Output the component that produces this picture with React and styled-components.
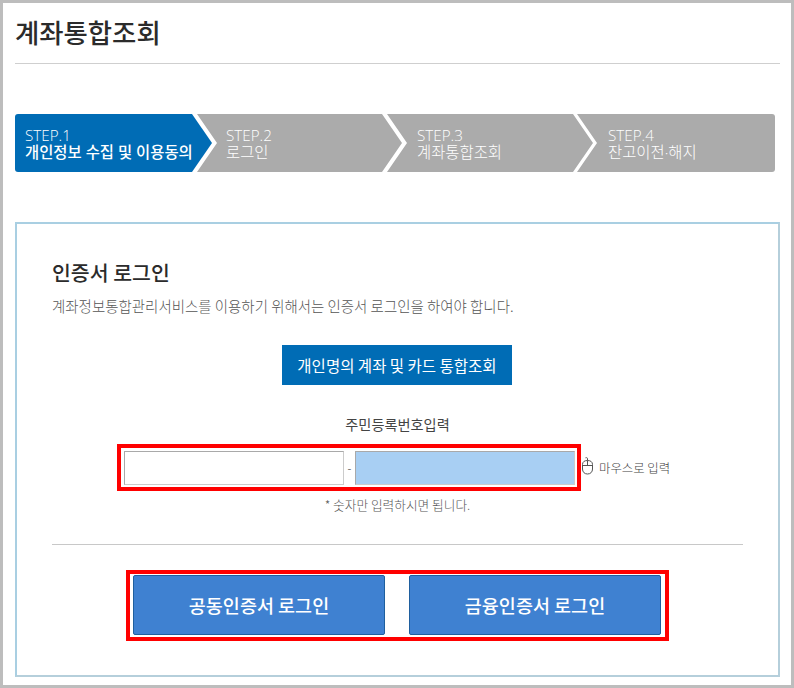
import React from "react";
import styled, { createGlobalStyle } from "styled-components";

const Global = createGlobalStyle`
  html, body { margin: 0; padding: 0; background: #fff; }
  body { font-family: "Noto Sans CJK KR", "Noto Sans", sans-serif; }
  * { box-sizing: border-box; }
`;

const Frame = styled.div`
  width: 794px;
  height: 688px;
  border: 3px solid #bdbdbd;
  padding: 0 11px 0 12px;
  background: #fff;
  overflow: hidden;
`;

const PageHeader = styled.header`
  height: 61px;
  border-bottom: 1px solid #cfcfcf;
  display: flex;
  align-items: flex-start;
`;

const PageTitle = styled.h1`
  margin: 11px 0 0 0;
  font-size: 26.4px;
  line-height: 36px;
  font-weight: 500;
  color: #2b2b2b;
`;

const StepList = styled.ol`
  list-style: none;
  margin: 50px 0 0;
  padding: 0;
  width: 760px;
  height: 58px;
  display: flex;
`;

const Step = styled.li`
  flex: 0 0 ${(p) => p.$w}px;
  margin-left: ${(p) => p.$ml}px;
  padding: 13px 0 0 ${(p) => p.$pl}px;
  background: ${(p) => (p.$active ? "#006cb5" : "#ababab")};
  color: #fff;
  font-size: 15.4px;
  line-height: 17px;
  font-weight: 300;
  clip-path: ${(p) =>
    p.$last
      ? "polygon(0 0, 100% 0, 100% 100%, 0 100%, 20px 50%)"
      : p.$first
      ? "polygon(0 0, calc(100% - 20px) 0, 100% 50%, calc(100% - 20px) 100%, 0 100%)"
      : "polygon(0 0, calc(100% - 20px) 0, 100% 50%, calc(100% - 20px) 100%, 0 100%, 20px 50%)"};
  border-radius: ${(p) => (p.$first ? "3px 0 0 3px" : p.$last ? "0 3px 3px 0" : "0")};
`;

const StepNo = styled.div`
  font-family: "Open Sans", "Noto Sans CJK KR", sans-serif;
  font-size: 15.2px;
`;

const StepName = styled.div`
  font-family: "Open Sans", "Noto Sans CJK KR", sans-serif;
  font-weight: ${(p) => (p.$active ? 500 : 300)};
  white-space: nowrap;
  font-size: 15.4px;
`;

const Card = styled.section`
  margin-top: 50px;
  height: 455px;
  border: 2px solid #a9cfe2;
  border-bottom-color: #b5cfdb;
  border-right-color: #b5cfdb;
  padding: 0 35px;
`;

const CardTitle = styled.h2`
  margin: 34px 0 0;
  font-size: 20.5px;
  line-height: 28px;
  font-weight: 500;
  color: #2b2b2b;
`;

const Lead = styled.p`
  margin: 10px 0 0;
  font-size: 14.46px;
  line-height: 20px;
  font-weight: 300;
  color: #555;
  white-space: nowrap;
`;

const Center = styled.div`
  display: flex;
  justify-content: center;
  padding-right: 1px;
`;

const PersonalButton = styled.button`
  margin-top: 29px;
  width: 230px;
  height: 40px;
  border: 0;
  background: #006cb5;
  color: #fff;
  font: 400 15.5px "Noto Sans CJK KR", sans-serif;
  padding: 0;
`;

const FieldLabel = styled.div`
  margin-top: 29px;
  text-align: center;
  font-size: 14.2px;
  line-height: 20px;
  color: #444;
`;

const InputRow = styled.div`
  margin: 10px 0 0 65px;
  display: flex;
  align-items: center;
`;

const RedBox = styled.div`
  display: flex;
  align-items: center;
  border: 4px solid #f00;
  padding: ${(p) => p.$pad};
  gap: ${(p) => p.$gap}px;
`;

const TextField = styled.div`
  width: 220px;
  height: 34px;
  border: 1px solid #ccc;
  border-top-color: #a9a9a9;
  border-left-color: #a9a9a9;
  background: ${(p) => (p.$masked ? "#a8cff3" : "#fff")};
`;

const Dash = styled.span`
  width: 11px;
  text-align: center;
  font-size: 11px;
  line-height: 14px;
  color: #666;
`;

const MouseHint = styled.div`
  display: flex;
  align-items: center;
  font-size: 12.4px;
  font-weight: 300;
  color: #444;
  white-space: nowrap;
`;

const MouseIcon = styled.svg`
  width: 18px;
  height: 18px;
  margin-bottom: 4px;
  display: block;
`;

const Hint = styled.div`
  margin-top: 5px;
  text-align: center;
  font-size: 12.7px;
  line-height: 18px;
  font-weight: 300;
  color: #555;
`;

const Divider = styled.hr`
  margin: 30px 0 0;
  border: 0;
  border-top: 1px solid #c8c8c8;
`;

const LoginRow = styled.div`
  margin: 25px 0 0 74px;
  display: flex;
`;

const LoginButton = styled.button`
  width: 252px;
  height: 60px;
  border: 1px solid #1f5f9e;
  border-radius: 2px;
  background: #3f81d1;
  color: #fff;
  font: 500 18.5px "Noto Sans CJK KR", sans-serif;
  padding: 0;
`;

const steps = [
  { no: "STEP.1", name: "개인정보 수집 및 이용동의", w: 197, ml: 0, pl: 10, active: true, first: true },
  { no: "STEP.2", name: "로그인", w: 205, ml: -15, pl: 29 },
  { no: "STEP.3", name: "계좌통합조회", w: 206, ml: -15, pl: 30 },
  { no: "STEP.4", name: "잔고이전·해지", w: 198, ml: -16, pl: 31, last: true },
];

export default function App() {
  return (
    <>
      <Global />
      <Frame>
        <PageHeader>
          <PageTitle>계좌통합조회</PageTitle>
        </PageHeader>
        <StepList>
          {steps.map((s) => (
            <Step key={s.no} $w={s.w} $ml={s.ml} $pl={s.pl} $active={s.active} $first={s.first} $last={s.last}>
              <StepNo>{s.no}</StepNo>
              <StepName $active={s.active}>{s.name}</StepName>
            </Step>
          ))}
        </StepList>
        <Card>
          <CardTitle>인증서 로그인</CardTitle>
          <Lead>계좌정보통합관리서비스를 이용하기 위해서는 인증서 로그인을 하여야 합니다.</Lead>
          <Center>
            <PersonalButton>개인명의 계좌 및 카드 통합조회</PersonalButton>
          </Center>
          <FieldLabel>주민등록번호입력</FieldLabel>
          <InputRow>
            <RedBox $pad="3px 2px 2px 3px" $gap={0}>
              <TextField />
              <Dash>-</Dash>
              <TextField $masked />
            </RedBox>
            <MouseHint>
              <MouseIcon viewBox="0 0 18 18" fill="none" stroke="#555" strokeWidth="1">
                <path d="M1.5 7.5 C1.5 4.8 3.5 3.5 6.5 3.5 C9.5 3.5 11.5 4.8 11.5 7.5 V12 C11.5 15 9.5 17 6.5 17 C3.5 17 1.5 15 1.5 12 Z" />
                <path d="M1.5 8.5 H11.5 M6.5 3.5 V8.5 M6.5 3.5 V1.5 C6.5 .7 5.5 .5 4.5 .8" />
              </MouseIcon>
              마우스로 입력
            </MouseHint>
          </InputRow>
          <Hint>* 숫자만 입력하시면 됩니다.</Hint>
          <Divider />
          <LoginRow>
            <RedBox $pad="1px 4px 2px 3px" $gap={24}>
              <LoginButton>공동인증서 로그인</LoginButton>
              <LoginButton>금융인증서 로그인</LoginButton>
            </RedBox>
          </LoginRow>
        </Card>
      </Frame>
    </>
  );
}
